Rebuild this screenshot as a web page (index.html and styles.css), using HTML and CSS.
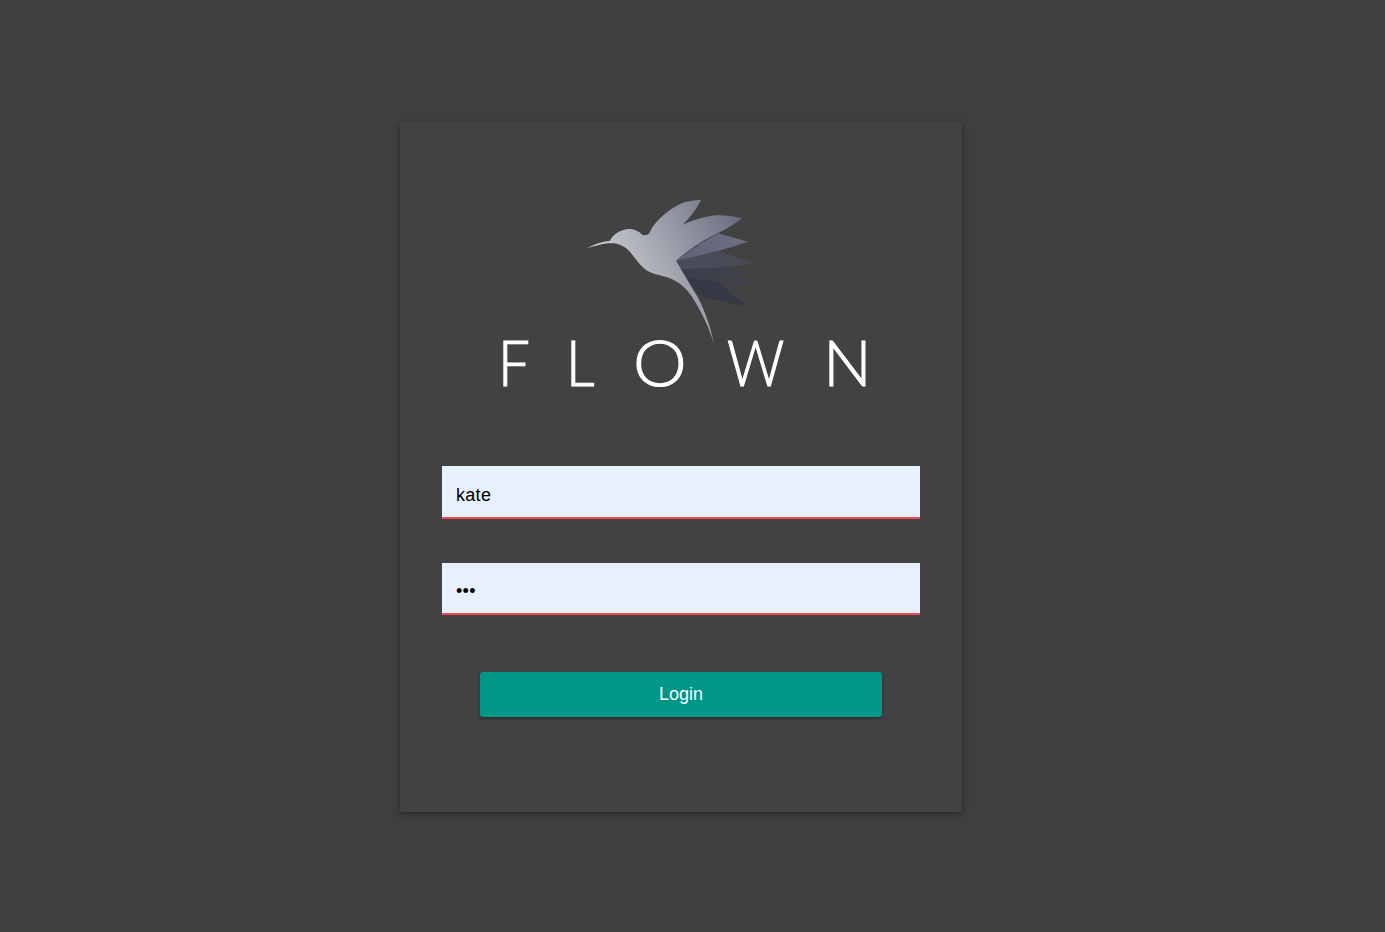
FILE: index.html
```html
<!DOCTYPE html>
<html lang="en">
<head>
<meta charset="utf-8">
<title>Flown</title>
<link rel="stylesheet" href="styles.css">
</head>
<body>
<main class="page">
  <form class="card">
    <div class="brand">
      <svg class="bird" viewBox="0 0 600 465" aria-hidden="true">
        <defs>
          <linearGradient id="bodyGrad" gradientUnits="userSpaceOnUse" x1="130" y1="240" x2="500" y2="60">
            <stop offset="0" stop-color="#c6c9ce"/>
            <stop offset="1" stop-color="#6a6d80"/>
          </linearGradient>
          <linearGradient id="f2" gradientUnits="userSpaceOnUse" x1="320" y1="210" x2="530" y2="150">
            <stop offset="0" stop-color="#5f6276"/>
            <stop offset="1" stop-color="#6d7083"/>
          </linearGradient>
          <linearGradient id="f3" gradientUnits="userSpaceOnUse" x1="320" y1="220" x2="550" y2="215">
            <stop offset="0" stop-color="#4a4c5c"/>
            <stop offset="1" stop-color="#474953"/>
          </linearGradient>
          <linearGradient id="f4" gradientUnits="userSpaceOnUse" x1="330" y1="245" x2="545" y2="280">
            <stop offset="0" stop-color="#3b3d4b"/>
            <stop offset="1" stop-color="#42434c"/>
          </linearGradient>
        </defs>
        <path fill="#363846" d="M350 262 L440 272 L525 346 C470 340 420 328 378 310 Z"/>
        <path fill="url(#f4)" d="M330 235 L472 230 L547 281 C480 280 420 274 350 262 Z"/>
        <path fill="url(#f3)" d="M318 212 L430 178 L552 218 C480 232 400 236 330 236 Z"/>
        <path fill="url(#f2)" d="M318 212 C360 180 405 150 445 130 L533 155 C470 178 390 196 318 212 Z"/>
        <path fill="url(#bodyGrad)" d="M50 175 C70 163 95 155 120 152 C128 135 150 118 178 117 C195 117 208 125 215 133 C222 138 232 136 238 130 C250 100 285 65 330 42 C350 33 375 30 393 30 C378 60 358 85 337 105 C365 92 400 80 440 76 C470 75 495 80 515 85 C490 105 465 120 442 130 C400 150 355 180 318 212 C340 250 365 290 385 325 C405 365 422 410 432 462 C420 420 400 375 372 330 C355 300 330 278 300 265 C270 255 240 252 222 235 C200 215 190 195 172 178 C155 162 135 158 115 160 C92 162 70 170 50 175 Z"/>
      </svg>
      <div class="wordmark" aria-label="FLOWN"><span class="wm-f">F</span><span class="wm-l">L</span><span class="wm-o">O</span><span class="wm-w">W</span><span class="wm-n">N</span></div>
    </div>
    <input class="field" type="text" value="kate" aria-label="Username">
    <input class="field field-password" type="password" value="abc" aria-label="Password">
    <button class="login" type="button">Login</button>
  </form>
</main>
</body>
</html>
```
FILE: styles.css
```css
* {
  box-sizing: border-box;
}

html,
body {
  margin: 0;
  height: 100%;
}

body {
  background: #3f3f3f;
  font-family: "Liberation Sans", Arial, sans-serif;
}

.page {
  padding: 122px 0 0 400px;
}

.card {
  display: flex;
  flex-direction: column;
  width: 562px;
  height: 690px;
  padding: 68px 42px 0;
  background: #424242;
  border-radius: 2px;
  box-shadow: 0 2px 5px rgba(0, 0, 0, 0.28), 0 2px 10px rgba(0, 0, 0, 0.12);
}

.brand {
  display: flex;
  flex-direction: column;
  height: 276px;
}

.bird {
  display: block;
  flex: none;
  width: 200px;
  height: 155px;
  margin-left: 128px;
}

.wordmark {
  display: flex;
  margin: -19px 0 0 56px;
  color: #fff;
  font-family: Lato, "Liberation Sans", sans-serif;
  font-weight: 300;
  font-size: 64px;
  line-height: 72px;
  white-space: nowrap;
  -webkit-text-stroke: 1.1px #fff;
}

.wordmark span {
  display: block;
  transform-origin: left center;
}

.wm-f {
  transform: scaleX(0.88);
}

.wm-l {
  margin-left: 32px;
  transform: scaleX(0.88);
}

.wm-o {
  margin-left: 34px;
  transform: scaleX(1.06);
}

.wm-w {
  margin-left: 44px;
  transform: scaleX(0.88);
}

.wm-n {
  margin-left: 31px;
}

.field {
  display: block;
  width: 100%;
  height: 53px;
  padding: 8px 14px 0;
  border: 0;
  border-bottom: 2px solid #f44b50;
  border-radius: 0;
  outline: 0;
  background: #e8f0fe;
  color: #000;
  font-family: inherit;
  font-size: 18px;
  letter-spacing: 0.3px;
}

.field-password {
  height: 52px;
  margin-top: 44px;
  padding-top: 7px;
}

.login {
  display: block;
  width: 402px;
  height: 45px;
  margin: 57px 0 0 38px;
  padding: 0;
  border: 0;
  border-radius: 3px;
  background: #009688;
  color: #fff;
  font-family: inherit;
  font-size: 18px;
  box-shadow: 0 2px 3px rgba(0, 0, 0, 0.3);
}
```
